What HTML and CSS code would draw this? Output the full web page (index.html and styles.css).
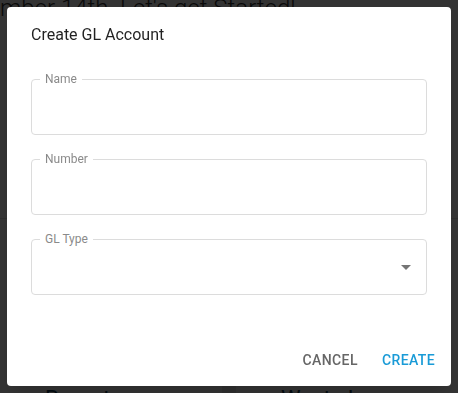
FILE: index.html
```html
<!DOCTYPE html>
<html lang="en">
  <head>
    <meta charset="UTF-8" />
    <meta name="viewport" content="width=device-width, initial-scale=1.0" />
    <title>Create GL Account</title>
    <link rel="stylesheet" href="styles.css">
  </head>
  <body>
    <!-- page behind the dialog -->
    <div class="page">
      <h1 class="greeting">mber 14th. Let's get Started!</h1>
      <div class="rule"></div>
      <div class="tiles">
        <div class="tile">Reports</div>
        <div class="tile-divider"></div>
        <div class="tile">Waste Log</div>
      </div>
    </div>

    <div class="backdrop">
      <div class="dialog">
        <h2 class="dialog-title">Create GL Account</h2>

        <div class="dialog-content">
          <div class="field">
            <label class="field-label">Name</label>
          </div>
          <div class="field">
            <label class="field-label">Number</label>
          </div>
          <div class="field select">
            <label class="field-label">GL Type</label>
            <svg class="arrow" viewBox="0 0 24 24" width="24" height="24">
              <path d="M7 10l5 5 5-5z"></path>
            </svg>
          </div>
        </div>

        <div class="dialog-actions">
          <button class="btn cancel">Cancel</button>
          <button class="btn create">Create</button>
        </div>
      </div>
    </div>
  </body>
</html>
```

FILE: styles.css
```css
body {
  margin: 0;
  padding: 0;
  box-sizing: border-box;
  background-color: #ffffff;
  font-family: Roboto, "Liberation Sans", sans-serif;
  overflow: hidden;
}

.page {
  height: 393px;
  display: flex;
  flex-direction: column;
  overflow: hidden;
}

.greeting {
  margin: -6px 0 0 0;
  font-size: 24px;
  line-height: 28px;
  font-weight: 300;
  color: #333;
  white-space: nowrap;
}

.rule {
  margin-top: 196px;
  height: 1px;
  background-color: #e0e0e0;
}

.tiles {
  margin-top: auto;
  height: 16px;
  display: flex;
}

.tile {
  flex: 1;
  padding-left: 45px;
  font-size: 22px;
  line-height: 44px;
  color: #0b3954;
  white-space: nowrap;
}

.tile-divider {
  width: 14px;
  background-color: #e8e8e8;
}

.backdrop {
  position: fixed;
  top: 0;
  left: 0;
  width: 100vw;
  height: 100vh;
  background-color: rgba(0, 0, 0, 0.8);
  display: flex;
  justify-content: center;
  align-items: center;
}

.dialog {
  background-color: #fff;
  width: 444px;
  height: 379px;
  border-radius: 4px;
  display: flex;
  flex-direction: column;
  box-shadow: 0 11px 15px -7px rgba(0, 0, 0, 0.2);
}

.dialog-title {
  margin: 0;
  padding: 16px 24px;
  font-size: 16px;
  line-height: 24px;
  font-weight: 400;
  color: rgba(0, 0, 0, 0.87);
}

.dialog-content {
  padding: 16px 24px 0 24px;
  display: flex;
  flex-direction: column;
  gap: 24px;
}

.field {
  position: relative;
  height: 56px;
  box-sizing: border-box;
  border: 1px solid #dcdcdc;
  border-radius: 4px;
}

.field-label {
  position: absolute;
  top: -9px;
  left: 8px;
  padding: 0 5px;
  background-color: #fff;
  font-size: 12px;
  line-height: 16px;
  color: #8a8a8a;
}

.arrow {
  position: absolute;
  right: 8px;
  top: 15px;
  fill: rgba(0, 0, 0, 0.54);
}

.dialog-actions {
  margin-top: auto;
  padding: 8px;
  display: flex;
  justify-content: flex-end;
  gap: 8px;
}

.btn {
  background: none;
  border: none;
  padding: 6px 8px;
  height: 36px;
  font-family: Roboto, "Liberation Sans", sans-serif;
  font-size: 14px;
  font-weight: 500;
  letter-spacing: 0.4px;
  text-transform: uppercase;
  cursor: pointer;
}

.cancel {
  color: #666;
}

.create {
  color: #1a9bd7;
}
```
